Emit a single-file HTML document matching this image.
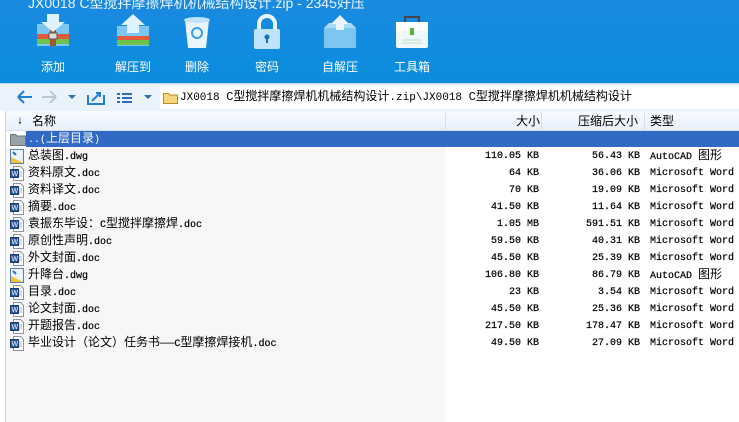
<!DOCTYPE html>
<html><head><meta charset="utf-8"><style>
*{margin:0;padding:0;box-sizing:border-box}
body{width:739px;height:422px;overflow:hidden;background:#fff;font-family:"Liberation Mono","Noto Sans CJK SC",monospace;position:relative}
b{font-weight:normal}
.top{position:absolute;left:0;top:0;width:739px;height:83px;background:linear-gradient(#1a8ae0,#0a8ddc)}
.title{position:absolute;left:28px;top:-7px;color:#fff;font:14px "Liberation Sans","Noto Sans CJK SC",sans-serif;opacity:.9}
.tb{position:absolute;top:12px;width:60px;text-align:center;color:#fff;font:12px "Liberation Sans","Noto Sans CJK SC",sans-serif}
.tb svg{display:block;margin:0 auto 6px}
.nav{position:absolute;left:0;top:83px;width:739px;height:28px;background:#eaf3fb;border-top:1px solid #bcd9f0}
.addr{position:absolute;left:160px;top:86px;width:579px;height:23px;background:#fff;font-size:11px;line-height:23px;padding-left:20px;white-space:nowrap;color:#000}
.addr b{font-size:12px}
.hdr{position:absolute;left:6px;top:111px;width:733px;height:20px;background:linear-gradient(#f7fbff,#e7f0fa);border-bottom:1px solid #d5e1ee;font:12px "Liberation Sans","Noto Sans CJK SC",sans-serif;line-height:20px}
.namebg{position:absolute;left:6px;top:147px;width:439px;height:275px;background:#f7f7f7}
.leftline{position:absolute;left:5px;top:111px;width:1px;height:311px;background:#cfd8e2}
.sel{position:absolute;left:26px;top:131px;width:713px;height:16px;background:#316ac5}
.row{position:absolute;left:0;height:17px;width:739px;font-size:10px;line-height:17px;white-space:nowrap;-webkit-text-stroke:0.2px #000}
.row .n{position:absolute;left:28px}
.row b{font-size:12px;-webkit-text-stroke:0}
.row .s{position:absolute;right:200px}
.row .c{position:absolute;right:99px}
.row .t{position:absolute;left:650px}
.ic{position:absolute;left:10px;top:1px;width:14px;height:15px}
</style></head><body>
<div class="top"></div>
<div class="title">JX0018 C型搅拌摩擦焊机机械结构设计.zip - 2345好压</div>
<div class="tb" style="left:23px"><svg width="40" height="40" viewBox="0 0 40 40"><path d="M4 12h32v22H4z" fill="#7cc6f2"/><path d="M4 22h32v5H4z" fill="#e35b3a"/><path d="M4 27h32v5H4z" fill="#6cc24a"/><path d="M17 12h6v22h-6z" fill="#9a5a2c"/><path d="M14 2h12v8h6L20 20 8 10h6z" fill="#dff2ff"/><rect x="16" y="21" width="8" height="6" fill="#ddd" stroke="#555"/></svg>添加</div>
<div class="tb" style="left:103px"><svg width="40" height="40" viewBox="0 0 40 40"><path d="M4 14h32v20H4z" fill="#7cc6f2"/><path d="M4 24h32v4H4z" fill="#e35b3a"/><path d="M4 28h32v5H4z" fill="#6cc24a"/><path d="M20 2l12 11h-6v8h-12v-8H8z" fill="#dff2ff"/></svg>解压到</div>
<div class="tb" style="left:167px"><svg width="40" height="40" viewBox="0 0 40 40"><path d="M8 8h24l-3 28H11z" fill="#eaf6ff"/><ellipse cx="20" cy="8" rx="13" ry="3" fill="#bfe3fa"/><circle cx="20" cy="21" r="5" fill="none" stroke="#3aa0e6" stroke-width="2"/></svg>删除</div>
<div class="tb" style="left:237px"><svg width="40" height="40" viewBox="0 0 40 40"><path d="M12 18v-6a8 8 0 0116 0v6" fill="none" stroke="#e8f5ff" stroke-width="4"/><rect x="7" y="17" width="26" height="20" rx="2" fill="#bfe3fa"/><circle cx="20" cy="25" r="2.5" fill="#1a6fb0"/><rect x="19" y="25" width="2" height="6" fill="#1a6fb0"/></svg>密码</div>
<div class="tb" style="left:310px"><svg width="40" height="40" viewBox="0 0 40 40"><path d="M4 16h32v20H4z" fill="#7cc6f2"/><path d="M4 16l5-5h22l5 5z" fill="#a8dcfa"/><path d="M20 3l9 9h-5v6h-8v-6h-5z" fill="#eaf6ff"/></svg>自解压</div>
<div class="tb" style="left:382px"><svg width="40" height="40" viewBox="0 0 40 40"><path d="M13 10v-5h14v5" fill="none" stroke="#444" stroke-width="2"/><rect x="4" y="10" width="32" height="26" rx="2" fill="#eef7fc"/><rect x="4" y="10" width="32" height="9" fill="#ffffff"/><rect x="18" y="16" width="4" height="7" fill="#4fb83a"/><path d="M10 28h20M10 31h20" stroke="#b8d8c0"/></svg>工具箱</div>
<div class="nav"></div>
<svg style="position:absolute;left:14px;top:88px" width="150" height="18" viewBox="0 0 150 18"><path d="M4 9h14M4 9l6-6M4 9l6 6" stroke="#1f80d8" stroke-width="2" fill="none"/><path d="M28 9h14M42 9l-6-6M42 9l-6 6" stroke="#b8c8d8" stroke-width="2" fill="none"/><path d="M54 7h8l-4 4z" fill="#2a6fb8"/><path d="M74 7v9h16V7" stroke="#1f80d8" stroke-width="2" fill="none"/><path d="M78 13l8-8M82 5h4v4" stroke="#1f80d8" stroke-width="2" fill="none"/><path d="M103 5h3v2h-3zM108 5h10v2h-10zM103 9h3v2h-3zM108 9h10v2h-10zM103 13h3v2h-3zM108 13h10v2h-10z" fill="#2a6fb8"/><path d="M130 7h8l-4 4z" fill="#2a6fb8"/></svg>
<div class="addr"><svg style="position:absolute;left:3px;top:5px" width="15" height="13"><path d="M0.5 2.5h5l1 1.5h8v8.5h-14z" fill="#f5d67a" stroke="#b88a20"/></svg>JX0018 <b>C型搅拌摩擦焊机机械结构设计</b>.zip\JX0018 <b>C型搅拌摩擦焊机机械结构设计</b></div>
<div class="hdr"><span style="position:absolute;left:12px;font-size:9px;color:#2a5a9a">🠗</span><span style="position:absolute;left:26px">名称</span><span style="position:absolute;left:439px;top:0;width:1px;height:20px;background:#d5e1ee"></span><span style="position:absolute;left:510px">大小</span><span style="position:absolute;left:535px;width:1px;height:20px;background:#d5e1ee"></span><span style="position:absolute;left:572px">压缩后大小</span><span style="position:absolute;left:638px;width:1px;height:20px;background:#d5e1ee"></span><span style="position:absolute;left:644px">类型</span></div>
<div class="namebg"></div>
<div class="leftline"></div>
<div class="sel"></div>
<svg style="position:absolute;left:10px;top:132px" width="16" height="14"><path d="M0.5 2.5h5l1.5 1.5h8.5v9.5h-15z" fill="#9aa3ab" stroke="#6b747c"/></svg>
<div class="row" style="top:131px;color:#fff;-webkit-text-stroke:0"><span class="n">..(<b>上层目录</b>)</span></div>
<div id="rows"></div>
<script>
var d=[["d","总装图.dwg","110.05 KB","56.43 KB","AutoCAD 图形"],["w","资料原文.doc","64 KB","36.06 KB","Microsoft Word"],["w","资料译文.doc","70 KB","19.09 KB","Microsoft Word"],["w","摘要.doc","41.50 KB","11.64 KB","Microsoft Word"],["w","袁振东毕设：C型搅拌摩擦焊.doc","1.05 MB","591.51 KB","Microsoft Word"],["w","原创性声明.doc","59.50 KB","40.31 KB","Microsoft Word"],["w","外文封面.doc","45.50 KB","25.39 KB","Microsoft Word"],["d","升降台.dwg","106.80 KB","86.79 KB","AutoCAD 图形"],["w","目录.doc","23 KB","3.54 KB","Microsoft Word"],["w","论文封面.doc","45.50 KB","25.36 KB","Microsoft Word"],["w","开题报告.doc","217.50 KB","178.47 KB","Microsoft Word"],["w","毕业设计（论文）任务书——C型摩擦焊接机.doc","49.50 KB","27.09 KB","Microsoft Word"]];
var h="";
function cj(s){return s.replace(/([^\x00-\x7f]+)/g,"<b>$1</b>")}
d.forEach(function(r,i){
var ic=r[0]=="w"?'<svg class="ic" viewBox="0 0 14 15"><path d="M3.5 .5h7l3 3v11h-10z" fill="#fff" stroke="#8a96a4"/><path d="M6 6h6M6 8h6M6 10h6" stroke="#b0b8c4"/><rect x=".5" y="3.5" width="8" height="8" fill="#2b579a" stroke="#1a3d75"/><text x="1.5" y="10" font-size="7" fill="#fff" font-family="Liberation Sans">W</text></svg>':'<svg class="ic" viewBox="0 0 14 15"><rect x=".5" y=".5" width="13" height="14" fill="#eaf3fb" stroke="#5a7fa8"/><path d="M1 8l12 6H1z" fill="#f2c230"/><path d="M3 3l3 3" stroke="#2a6fb8" stroke-width="2"/></svg>';
h+='<div class="row" style="top:'+(148+i*17)+'px">'+ic+'<span class="n">'+cj(r[1])+'</span><span class="s">'+r[2]+'</span><span class="c">'+r[3]+'</span><span class="t">'+cj(r[4])+'</span></div>';});
document.getElementById("rows").innerHTML=h;
</script>
</body></html>
